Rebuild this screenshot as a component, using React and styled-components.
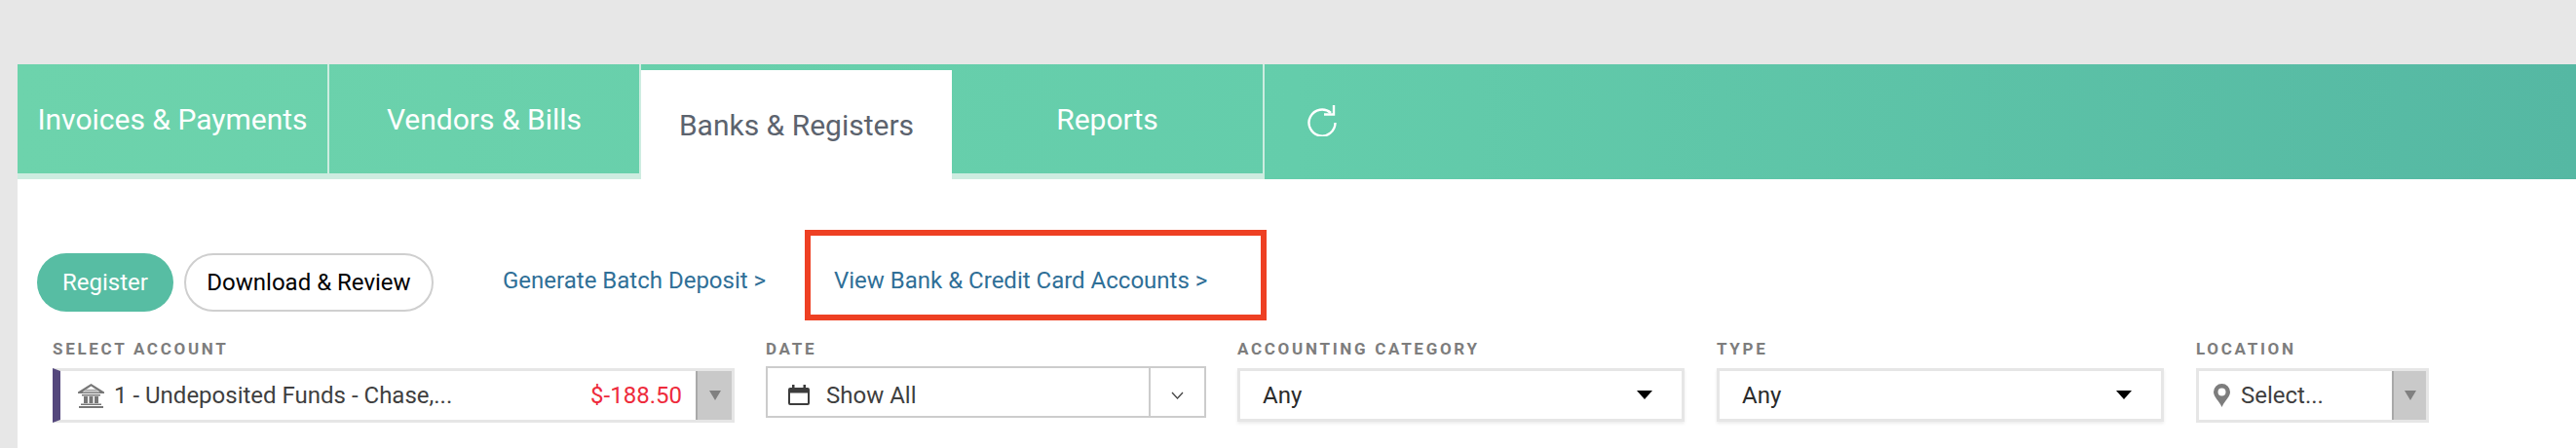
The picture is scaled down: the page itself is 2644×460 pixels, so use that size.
import React from 'react'
import styled, {createGlobalStyle} from 'styled-components'

const GlobalStyle = createGlobalStyle`
  html, body {
    margin: 0;
    padding: 0;
    background: #ffffff;
    font-family: Roboto, "Liberation Sans", sans-serif;
  }
`

const Page = styled.div`
  width: 2644px;
  height: 460px;
  overflow: hidden;
  box-sizing: border-box;
  background: #e7e7e7;
  padding: 66px 0 0 18px;
`

const Panel = styled.div`
  background: #ffffff;
  height: 394px;
`

const TabBar = styled.div`
  display: flex;
  height: 118px;
  background: linear-gradient(90deg, #6dd3ac 0%, #64cdab 50%, #55b8a3 100%);
`

const Tab = styled.div`
  width: ${p => p.$width}px;
  box-sizing: border-box;
  height: 118px;
  display: flex;
  align-items: center;
  justify-content: center;
  font-size: 30px;
  color: #ffffff;
  border-right: 2px solid #cdece0;
  border-bottom: 6px solid #cdece0;
`

const ActiveTab = styled(Tab)`
  background: #ffffff;
  color: #5c636e;
  margin-top: 6px;
  height: 112px;
  border: none;
`

const RefreshSlot = styled.div`
  padding: 42px 0 0 44px;
  line-height: 0;
`

const ActionRow = styled.div`
  display: flex;
  align-items: flex-start;
  height: 93px;
  margin-top: 52px;
  padding-left: 20px;
`

const Pill = styled.div`
  box-sizing: border-box;
  flex: none;
  height: 60px;
  width: ${p => p.$width}px;
  margin: 24px 11px 0 0;
  border-radius: 30px;
  display: flex;
  align-items: center;
  justify-content: center;
  font-size: 24px;
  color: ${p => (p.$active ? '#ffffff' : '#000000')};
  background: ${p => (p.$active ? '#57bda3' : '#ffffff')};
  border: ${p => (p.$active ? 'none' : '2px solid #cfcfcf')};
`

const BatchLink = styled.a`
  flex: none;
  width: 310px;
  margin: 38px 0 0 60px;
  font-size: 24px;
  line-height: 28px;
  color: #2f6f97;
`

const Highlight = styled.div`
  box-sizing: border-box;
  flex: none;
  width: 474px;
  height: 93px;
  padding: 10px 0 0 24px;
  display: flex;
  align-items: center;
  font-size: 24px;
  color: #2f6f97;
  border: 6px solid #ee4023;
`

const FilterRow = styled.div`
  display: flex;
  margin-top: 19px;
  padding-left: 36px;
`

const Field = styled.div`
  width: ${p => p.$width}px;
  margin-right: ${p => p.$gap}px;
  flex: none;
`

const Label = styled.div`
  font-size: 17px;
  font-weight: 700;
  letter-spacing: 2.7px;
  line-height: 20px;
  color: #7d7d7d;
  margin-bottom: 10px;
`

const SelectBox = styled.div`
  box-sizing: border-box;
  display: flex;
  align-items: center;
  height: 56px;
  background: #ffffff;
  border: 3px solid #e6e6e6;
  font-size: 24px;
  color: #3f3f3f;
`

const AccountBox = styled(SelectBox)`
  border-left: 8px solid #54477c;
`

const DateBox = styled(SelectBox)`
  height: 53px;
  margin-top: -2px;
  border: 2px solid #cccccc;
`

const PlainBox = styled(SelectBox)`
  height: 55px;
  justify-content: space-between;
  padding: 0 30px 0 23px;
  color: #2b2b2b;
  box-shadow: 0 2px 3px rgba(0, 0, 0, 0.08);
`

const BoxText = styled.span`
  flex: 1;
  white-space: nowrap;
`

const DateText = styled(BoxText)`
  padding-top: 7px;
`

const Amount = styled.span`
  color: #ee2b3b;
  margin-right: 14px;
`

const Caret = styled.div`
  box-sizing: border-box;
  width: ${p => p.$width}px;
  align-self: stretch;
  flex: none;
  display: flex;
  align-items: center;
  justify-content: center;
  background: #c9c9c9;
  border-left: 2px solid #a9a9a9;
`

const ChevronCell = styled.div`
  box-sizing: border-box;
  width: 57px;
  padding-top: 7px;
  align-self: stretch;
  flex: none;
  display: flex;
  align-items: center;
  justify-content: center;
  border-left: 2px solid #cccccc;
`

const IconSlot = styled.span`
  display: flex;
  flex: none;
  margin: ${p => p.$top || 0}px ${p => p.$right}px 0 ${p => p.$left}px;
`

const DownTriangle = ({width, height, color = '#000'}) => (
  <svg width={width} height={height} viewBox="0 0 16 10" preserveAspectRatio="none">
    <path d="M0 0h16L8 10z" fill={color} />
  </svg>
)

const RefreshIcon = () => (
  <svg width="30" height="32" viewBox="0 0 30 32" fill="none" stroke="#fff" strokeWidth="2.4">
    <path d="M24 8 A13.5 13.5 0 1 0 28.5 18" />
    <path d="M27 0 V9.5 H17" />
  </svg>
)

const BankIcon = () => (
  <svg width="27" height="25" viewBox="0 0 27 25" fill="#777">
    <path d="M13.5 0 27 8.5V10H0V8.5zM13.5 2.5 4.5 8.5h18z" fillRule="evenodd" />
    <path d="M9 5.8h9l3 2H6z" opacity="0.6" />
    <path d="M4 11h19v1.4H4zM6 13h4v7H6zM11.5 13h4v7h-4zM17 13h4v7h-4zM3 20.6h21V22H3zM1 23h25v2H1z" />
  </svg>
)

const CalendarIcon = () => (
  <svg width="22" height="21" viewBox="0 0 22 21">
    <path d="M2 3h2V0h2.500v3h9V0H18v3h2a2 2 0 0 1 2 2v14a2 2 0 0 1-2 2H2a2 2 0 0 1-2-2V5a2 2 0 0 1 2-2zM2 8.500V19h18V8.500z" fill="#3c3c3c" fillRule="evenodd" />
  </svg>
)

const PinIcon = () => (
  <svg width="17" height="24" viewBox="0 0 17 24">
    <path d="M8.500 0A8.500 8.500 0 0 1 17 8.500C17 13.500 11 18 8.500 24 6 18 0 13.500 0 8.500A8.500 8.500 0 0 1 8.500 0zm0 4.500a4 4 0 1 0 0 8 4 4 0 0 0 0-8z" fill="#7d7d7d" fillRule="evenodd" />
  </svg>
)

const ChevronDown = () => (
  <svg width="13" height="8" viewBox="0 0 13 8" fill="none" stroke="#444" strokeWidth="1.3">
    <path d="M1 1l5.500 6L12 1" />
  </svg>
)

export default function App() {
  return (
    <Page>
      <GlobalStyle />
      <Panel>
        <TabBar>
          <Tab $width={320}>Invoices &amp; Payments</Tab>
          <Tab $width={320}>Vendors &amp; Bills</Tab>
          <ActiveTab $width={319}>Banks &amp; Registers</ActiveTab>
          <Tab $width={321}>Reports</Tab>
          <RefreshSlot>
            <RefreshIcon />
          </RefreshSlot>
        </TabBar>
        <ActionRow>
          <Pill $active $width={140}>Register</Pill>
          <Pill $width={256}>Download &amp; Review</Pill>
          <BatchLink>Generate Batch Deposit &gt;</BatchLink>
          <Highlight>View Bank &amp; Credit Card Accounts &gt;</Highlight>
        </ActionRow>
        <FilterRow>
          <Field $width={700} $gap={32}>
            <Label>SELECT ACCOUNT</Label>
            <AccountBox>
              <IconSlot $left={18} $right={10}><BankIcon /></IconSlot>
              <BoxText>1 - Undeposited Funds - Chase,...</BoxText>
              <Amount>$-188.50</Amount>
              <Caret $width={37}><DownTriangle width={12} height={10} color="#808080" /></Caret>
            </AccountBox>
          </Field>
          <Field $width={452} $gap={32}>
            <Label>DATE</Label>
            <DateBox>
              <IconSlot $top={6} $left={21} $right={17}><CalendarIcon /></IconSlot>
              <DateText>Show All</DateText>
              <ChevronCell><ChevronDown /></ChevronCell>
            </DateBox>
          </Field>
          <Field $width={459} $gap={33}>
            <Label>ACCOUNTING CATEGORY</Label>
            <PlainBox>
              Any
              <DownTriangle width={16} height={9} />
            </PlainBox>
          </Field>
          <Field $width={459} $gap={33}>
            <Label>TYPE</Label>
            <PlainBox>
              Any
              <DownTriangle width={16} height={9} />
            </PlainBox>
          </Field>
          <Field $width={239} $gap={0}>
            <Label>LOCATION</Label>
            <SelectBox>
              <IconSlot $left={15} $right={11}><PinIcon /></IconSlot>
              <BoxText>Select...</BoxText>
              <Caret $width={35}><DownTriangle width={12} height={10} color="#808080" /></Caret>
            </SelectBox>
          </Field>
        </FilterRow>
      </Panel>
    </Page>
  )
}
